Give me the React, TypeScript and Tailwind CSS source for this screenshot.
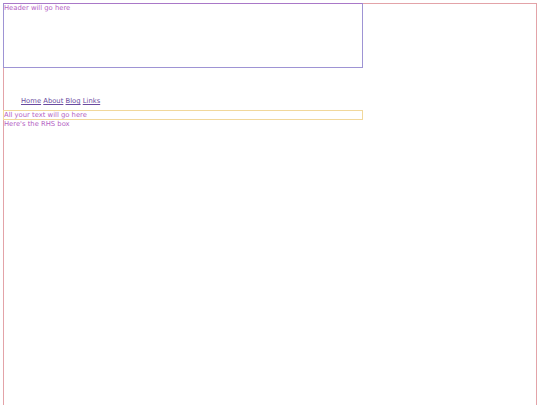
export default function App() {
  return (
    <div className="w-[540px] h-[405px] overflow-hidden bg-white pt-[3px] pl-[3px]" style={{ fontFamily: '"DejaVu Sans", sans-serif' }}>
      <div className="w-[534px] h-[420px] border border-[#e3a3a8] text-[6.8px] leading-[8px] text-[#b462c4]">
        <div className="-ml-px -mt-px w-[360px] h-[65px] border border-[#9e94d4] border-t-[#a978c8]">
          <p>Header will go here</p>
        </div>
        <nav className="pl-[17px] mt-[29px] h-[13px] text-[#6a4aa0]">
          <a href="#" className="underline">Home</a>{' '}
          <a href="#" className="underline">About</a>{' '}
          <a href="#" className="underline">Blog</a>{' '}
          <a href="#" className="underline">Links</a>
        </nav>
        <div className="-ml-px w-[360px] h-[10px] border border-[#f1d89c]">
          <p>All your text will go here</p>
        </div>
        <div className="-ml-px pl-px">
          <p>Here's the RHS box</p>
        </div>
      </div>
    </div>
  );
}
